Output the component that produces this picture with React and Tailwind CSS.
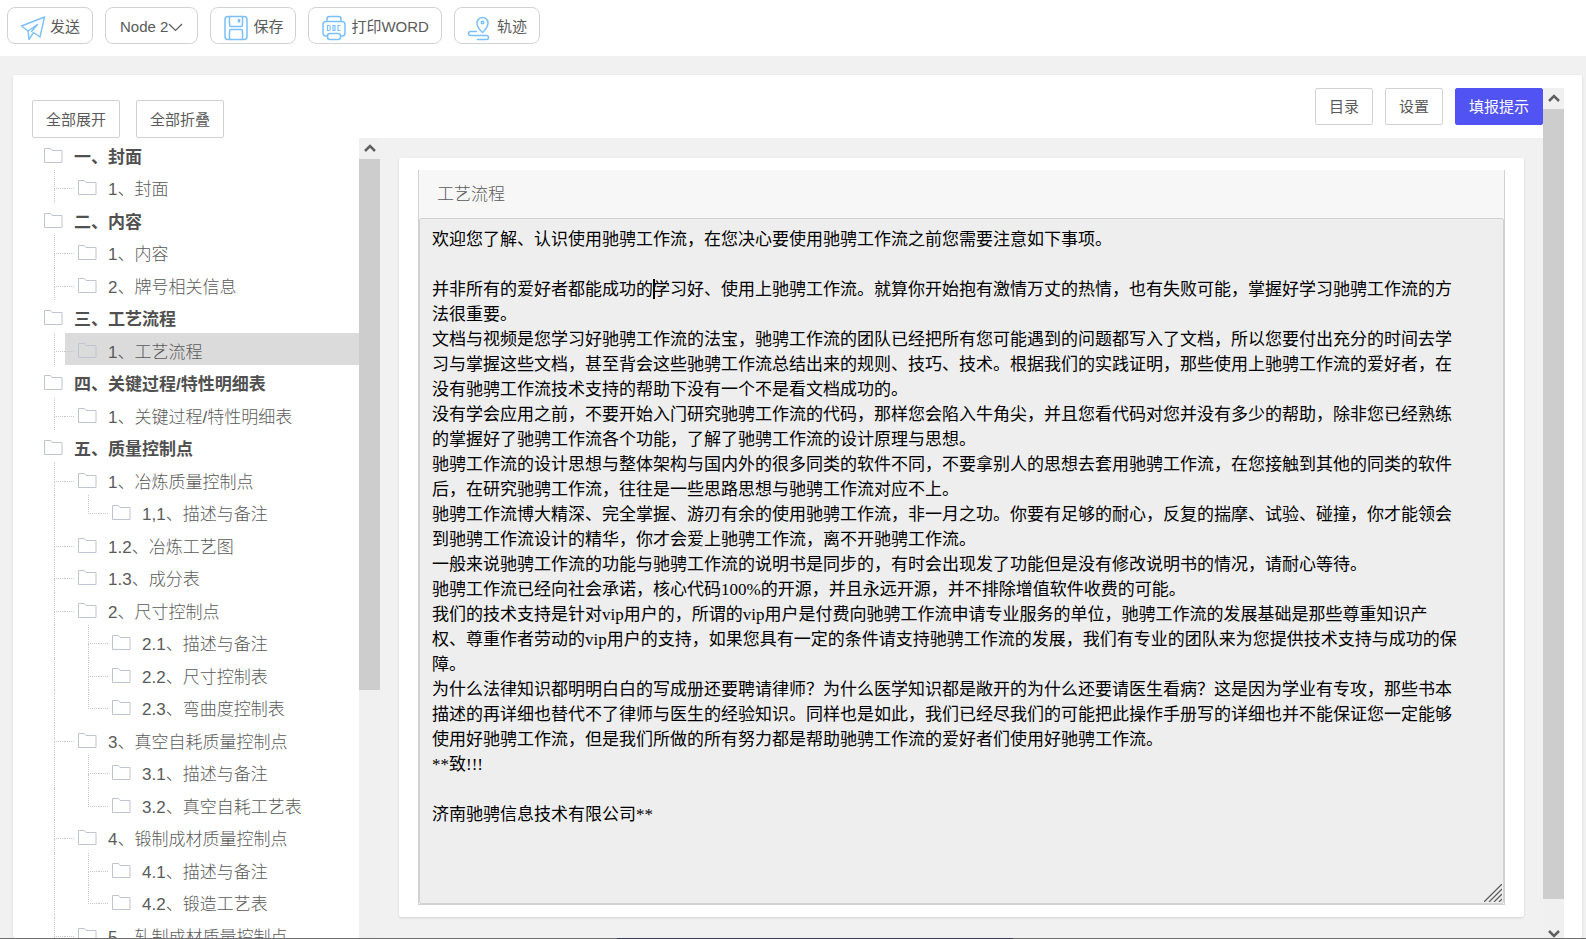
import React, { useState } from "react";

const NODES = [
  { depth: 0, text: "一、封面" },
  { depth: 1, text: "1、封面" },
  { depth: 0, text: "二、内容" },
  { depth: 1, text: "1、内容" },
  { depth: 1, text: "2、牌号相关信息" },
  { depth: 0, text: "三、工艺流程" },
  { depth: 1, text: "1、工艺流程" },
  { depth: 0, text: "四、关键过程/特性明细表" },
  { depth: 1, text: "1、关键过程/特性明细表" },
  { depth: 0, text: "五、质量控制点" },
  { depth: 1, text: "1、冶炼质量控制点" },
  { depth: 2, text: "1,1、描述与备注" },
  { depth: 1, text: "1.2、冶炼工艺图" },
  { depth: 1, text: "1.3、成分表" },
  { depth: 1, text: "2、尺寸控制点" },
  { depth: 2, text: "2.1、描述与备注" },
  { depth: 2, text: "2.2、尺寸控制表" },
  { depth: 2, text: "2.3、弯曲度控制表" },
  { depth: 1, text: "3、真空自耗质量控制点" },
  { depth: 2, text: "3.1、描述与备注" },
  { depth: 2, text: "3.2、真空自耗工艺表" },
  { depth: 1, text: "4、锻制成材质量控制点" },
  { depth: 2, text: "4.1、描述与备注" },
  { depth: 2, text: "4.2、锻造工艺表" },
  { depth: 1, text: "5、轧制成材质量控制点" },
];

const CONTENT = `欢迎您了解、认识使用驰骋工作流，在您决心要使用驰骋工作流之前您需要注意如下事项。

并非所有的爱好者都能成功的学习好、使用上驰骋工作流。就算你开始抱有激情万丈的热情，也有失败可能，掌握好学习驰骋工作流的方法很重要。
文档与视频是您学习好驰骋工作流的法宝，驰骋工作流的团队已经把所有您可能遇到的问题都写入了文档，所以您要付出充分的时间去学习与掌握这些文档，甚至背会这些驰骋工作流总结出来的规则、技巧、技术。根据我们的实践证明，那些使用上驰骋工作流的爱好者，在没有驰骋工作流技术支持的帮助下没有一个不是看文档成功的。
没有学会应用之前，不要开始入门研究驰骋工作流的代码，那样您会陷入牛角尖，并且您看代码对您并没有多少的帮助，除非您已经熟练的掌握好了驰骋工作流各个功能，了解了驰骋工作流的设计原理与思想。
驰骋工作流的设计思想与整体架构与国内外的很多同类的软件不同，不要拿别人的思想去套用驰骋工作流，在您接触到其他的同类的软件后，在研究驰骋工作流，往往是一些思路思想与驰骋工作流对应不上。
驰骋工作流博大精深、完全掌握、游刃有余的使用驰骋工作流，非一月之功。你要有足够的耐心，反复的揣摩、试验、碰撞，你才能领会到驰骋工作流设计的精华，你才会爱上驰骋工作流，离不开驰骋工作流。
一般来说驰骋工作流的功能与驰骋工作流的说明书是同步的，有时会出现发了功能但是没有修改说明书的情况，请耐心等待。
驰骋工作流已经向社会承诺，核心代码100%的开源，并且永远开源，并不排除增值软件收费的可能。
我们的技术支持是针对vip用户的，所谓的vip用户是付费向驰骋工作流申请专业服务的单位，驰骋工作流的发展基础是那些尊重知识产权、尊重作者劳动的vip用户的支持，如果您具有一定的条件请支持驰骋工作流的发展，我们有专业的团队来为您提供技术支持与成功的保障。
为什么法律知识都明明白白的写成册还要聘请律师？为什么医学知识都是敞开的为什么还要请医生看病？这是因为学业有专攻，那些书本描述的再详细也替代不了律师与医生的经验知识。同样也是如此，我们已经尽我们的可能把此操作手册写的详细也并不能保证您一定能够使用好驰骋工作流，但是我们所做的所有努力都是帮助驰骋工作流的爱好者们使用好驰骋工作流。
**致!!!

济南驰骋信息技术有限公司**`;

function SendIcon() {
  return (
    <svg width="26" height="26" viewBox="0 0 26 26" fill="none" stroke="#7cc0fb" strokeWidth="1.4" strokeLinejoin="round" strokeLinecap="round">
      <path d="M1.5 11 24.5 2l-4.500 20-6.500-4.500-4.500 7-1-8.500z" />
      <path d="M8 16 17.500 9.500 11.500 16.500" />
    </svg>
  );
}

function SaveIcon() {
  return (
    <svg width="26" height="26" viewBox="0 0 26 26" fill="none" stroke="#7cc0fb" strokeWidth="1.500">
      <rect x="2" y="1.500" width="22" height="23" rx="3" />
      <path d="M6.500 1.500v8.500q0 1.500 1.500 1.500h10q1.500 0 1.500-1.500V1.500M6.500 24v-8q0-1.500 1.500-1.500h10q1.500 0 1.500 1.500v8" />
      <path d="M16 4v3.500" strokeWidth="2.500" />
    </svg>
  );
}

function PrintIcon() {
  return (
    <svg width="26" height="26" viewBox="0 0 26 26" fill="none" stroke="#7cc0fb" strokeWidth="1.500">
      <path d="M6 6.500V4q0-2.500 2.500-2.500h9Q20 1.500 20 4v2.500" />
      <path d="M6.500 21H5q-3 0-3-3V9.500q0-3 3-3h16q3 0 3 3V18q0 3-3 3h-1.500" />
      <rect x="6.500" y="18.500" width="13" height="6" rx="2.500" />
      <path d="M6.500 10.500v5H8q1.200 0 1.200-1.500v-2q0-1.500-1.200-1.500zM12 10.500h2v5h-2zM19.500 10.500H17v5h2.500" strokeWidth="1.200" />
    </svg>
  );
}

function TrackIcon() {
  return (
    <svg width="26" height="26" viewBox="0 0 26 26" fill="none" stroke="#7cc0fb" strokeWidth="1.500" strokeLinecap="round">
      <path d="M15.500 17.500q-5.500-5-5.500-9.500a5.500 5.500 0 0 1 11 0q0 4.500-5.500 9.500z" />
      <circle cx="15.500" cy="7.500" r="1.300" />
      <path d="M9.500 16.500h-6a2 2 0 0 0 0 4h16a2 2 0 0 1 0 4h-9" />
    </svg>
  );
}

function FolderIcon() {
  return (
    <svg className="shrink-0" width="19" height="15" viewBox="0 0 19 15" fill="none" stroke="#c0c4d0" strokeWidth="1">
      <path d="M.5 .5h6l1.500 2h10v12H.5z" />
    </svg>
  );
}

function Chevron({ down }) {
  return (
    <svg width="12" height="8" viewBox="0 0 12 8" fill="none" stroke="#606060" strokeWidth="2.500">
      <path d={down ? "M1 1l5 5 5-5" : "M1 7l5-5 5 5"} />
    </svg>
  );
}

function ToolButton({ icon, children }) {
  return (
    <button type="button" className="flex h-[37px] items-center gap-1 rounded-lg border border-[#d2d2d2] bg-white px-3 pt-1 text-[15px]">
      {icon}
      <span>{children}</span>
    </button>
  );
}

function PlainButton({ children, primary, onClick }) {
  return (
    <button
      type="button"
      onClick={onClick}
      className={`rounded-xs border px-[13px] pt-0.5 text-[15px] ${
        primary ? "border-[#5153f3] bg-[#5153f3] text-white" : "border-[#d2d2d2] bg-white"
      }`}
    >
      {children}
    </button>
  );
}

// joint of the dotted guide: corner for the last child, tee for the others
function Guide({ last }) {
  return (
    <span className="flex w-[11px] shrink-0 flex-col">
      <span className="h-[19px] border-b border-l border-dotted border-[#c8c8c8]" />
      {!last && <span className="grow border-l border-dotted border-[#c8c8c8]" />}
    </span>
  );
}

function TreeRow({ node, last, active, onSelect }) {
  return (
    <li className="flex h-8 pl-[13px] even:h-[33px]">
      {node.depth > 0 && <span className="w-[10px] shrink-0" />}
      {node.depth > 1 && <span className="w-[34px] shrink-0 border-l border-dotted border-[#c8c8c8]" />}
      {node.depth > 0 && <Guide last={last} />}
      <button
        type="button"
        onClick={onSelect}
        className={`flex grow items-start text-left text-[17px] whitespace-nowrap ${active ? "bg-[#dbdbdb]" : ""}`}
      >
        {node.depth > 0 && <span className="mr-1 h-[19px] w-[9px] shrink-0 border-b border-dotted border-[#c8c8c8]" />}
        <span className="mt-[10px] mr-[11px]">
          <FolderIcon />
        </span>
        <span className={`mt-2 leading-6 ${node.depth === 0 ? "font-bold text-[#505050]" : "font-light"}`}>{node.text}</span>
      </button>
    </li>
  );
}

export default function App() {
  const [selected, setSelected] = useState(6);
  const [content, setContent] = useState(CONTENT);

  return (
    <div className="flex h-screen flex-col overflow-hidden bg-[#f1f1f1] font-['Liberation_Sans','Noto_Sans_CJK_SC',sans-serif] text-[#5a5a5a]">
      <header className="flex h-14 shrink-0 items-start gap-3 bg-white pt-[7px] pl-[7px]">
        <ToolButton icon={<SendIcon />}>发送</ToolButton>
        <button type="button" className="flex h-[37px] items-center rounded-lg border border-[#d2d2d2] bg-white px-[14px] pt-1 text-[15px]">
          Node 2
          <svg width="15" height="9" viewBox="0 0 15 9" fill="none" stroke="#5a5a5a" strokeWidth="1.200">
            <path d="M1 1l6.500 6.500L14 1" />
          </svg>
        </button>
        <ToolButton icon={<SaveIcon />}>保存</ToolButton>
        <ToolButton icon={<PrintIcon />}>打印WORD</ToolButton>
        <ToolButton icon={<TrackIcon />}>轨迹</ToolButton>
      </header>

      <main className="mt-[19px] mr-1 ml-[13px] flex min-h-0 grow rounded-xs bg-white pt-[13px] pr-[18px] shadow-sm">
        <aside className="flex w-[367px] shrink-0 flex-col">
          <div className="flex h-[50px] shrink-0 gap-4 pt-3 pl-[19px]">
            <PlainButton>全部展开</PlainButton>
            <PlainButton>全部折叠</PlainButton>
          </div>
          <div className="flex min-h-0 grow">
            <ul className="min-w-0 grow overflow-hidden pl-[18px]">
              {NODES.map((node, i) => (
                <TreeRow
                  key={i}
                  node={node}
                  last={node.depth === 2 && NODES[i + 1]?.depth !== 2}
                  active={i === selected}
                  onSelect={() => setSelected(i)}
                />
              ))}
            </ul>
            <div className="flex w-[21px] shrink-0 flex-col items-center bg-[#f0f0f0]">
              <span className="flex h-[21px] items-center pb-0.5">
                <Chevron />
              </span>
              <span className="h-[531px] w-full bg-[#cdcdcd]" />
            </div>
          </div>
        </aside>

        <section className="flex min-w-0 grow flex-col">
          <div className="flex h-[50px] shrink-0 justify-end gap-3 pb-[13px]">
            <PlainButton>目录</PlainButton>
            <PlainButton>设置</PlainButton>
            <PlainButton primary>填报提示</PlainButton>
          </div>
          <div className="flex min-h-0 grow flex-col bg-[#f1f1f1] pt-5 pr-[19px] pb-[21px] pl-[19px]">
            <div className="flex grow flex-col rounded-xs bg-white px-[19px] py-3 shadow-sm">
              <div className="flex grow flex-col border-x border-b border-[#d2d2d2]">
                <label htmlFor="flow" className="h-12 shrink-0 bg-[#f7f7f7] pt-px pl-[18px] text-[17px] leading-12 font-light">
                  工艺流程
                </label>
                <div className="relative flex grow">
                  <textarea
                    id="flow"
                    value={content}
                    onChange={(e) => setContent(e.target.value)}
                    className="w-full resize-none overflow-hidden rounded-xs border border-[#d2d2d2] bg-[#eeeeee] py-2 pr-11 pl-3 font-['Liberation_Serif','Noto_Sans_CJK_SC',serif] text-[17px] leading-[25px] text-black outline-none"
                  />
                  <span className="pointer-events-none absolute top-[61px] left-[234px] h-5 w-0.5 bg-black" />
                  <svg className="pointer-events-none absolute right-0.5 bottom-0.5" width="18" height="18" viewBox="0 0 18 18" stroke="#606060" strokeWidth="1.300">
                    <path d="M0 18 18 0M5 18 18 5M10 18l8-8M15 18l3-3" />
                  </svg>
                </div>
              </div>
            </div>
          </div>
        </section>

        <div className="flex w-[21px] shrink-0 flex-col items-center bg-[#f0f0f0]">
          <span className="flex h-[21px] shrink-0 items-center pb-0.5">
            <Chevron />
          </span>
          <span className="w-full grow bg-[#cdcdcd]" />
          <span className="flex h-[39px] shrink-0 items-end">
            <Chevron down />
          </span>
        </div>
      </main>
      <footer className="flex h-px shrink-0 justify-center bg-[#6e6e6e]">
        <span className="ml-11 w-1/4 bg-[#3d3d55]" />
      </footer>
    </div>
  );
}
